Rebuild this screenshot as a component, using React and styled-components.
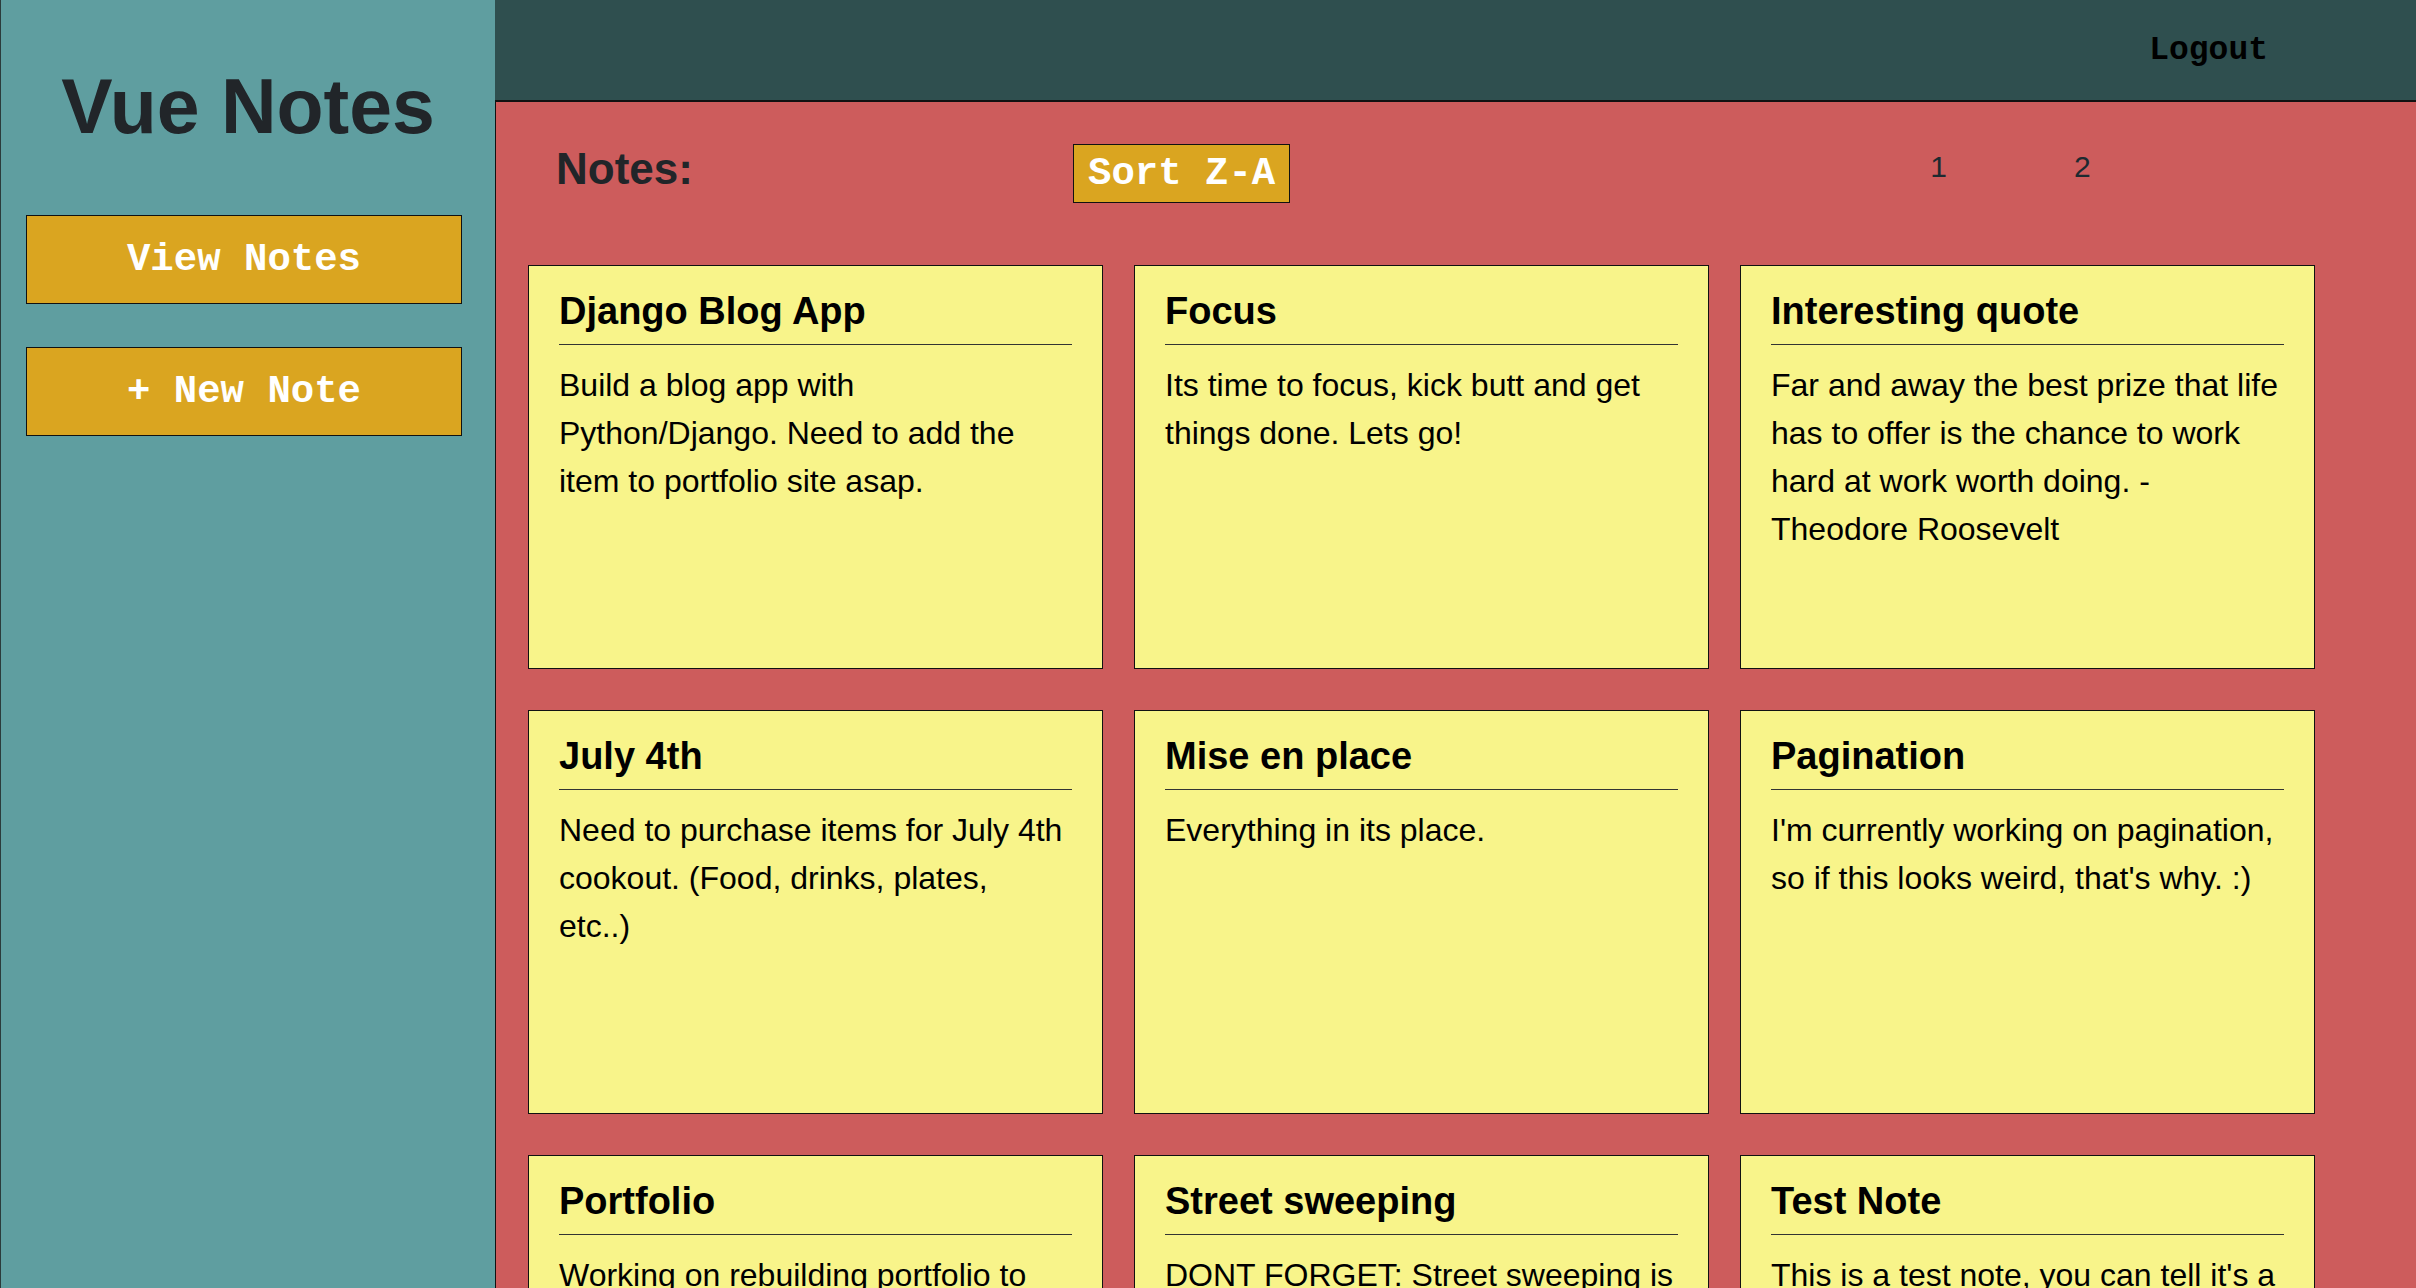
import React from "react";
import styled, { createGlobalStyle } from "styled-components";

const notes = [
  {
    title: "Django Blog App",
    body: "Build a blog app with Python/Django. Need to add the item to portfolio site asap.",
  },
  { title: "Focus", body: "Its time to focus, kick butt and get things done. Lets go!" },
  {
    title: "Interesting quote",
    body: "Far and away the best prize that life has to offer is the chance to work hard at work worth doing. - Theodore Roosevelt",
  },
  {
    title: "July 4th",
    body: "Need to purchase items for July 4th cookout. (Food, drinks, plates,\netc..)",
  },
  { title: "Mise en place", body: "Everything in its place." },
  {
    title: "Pagination",
    body: "I'm currently working on pagination, so if this looks weird, that's why. :)",
  },
  {
    title: "Portfolio",
    body: "Working on rebuilding portfolio to showcase the new projects.",
  },
  {
    title: "Street sweeping",
    body: "DONT FORGET: Street sweeping is on Tuesday morning.",
  },
  {
    title: "Test Note",
    body: "This is a test note, you can tell it's a test because of the title.",
  },
];

const GlobalStyle = createGlobalStyle`
  * {
    box-sizing: border-box;
  }
  body {
    margin: 0;
    font-family: "Liberation Sans", Arial, Helvetica, sans-serif;
    color: #212529;
  }
`;

const Layout = styled.div`
  display: flex;
  min-height: 100vh;
`;

const Sidebar = styled.aside`
  flex: 0 0 495px;
  background: #5f9ea0;
  border-left: 1px solid #2b3b3b;
  padding: 64px 0 0 25px;
  display: flex;
  flex-direction: column;
`;

const Brand = styled.h1`
  margin: 0 0 66px -25px;
  font-size: 77px;
  line-height: 85px;
  font-weight: 700;
  text-align: center;
  color: #212529;
`;

const SideButton = styled.button`
  width: 436px;
  height: 89px;
  margin-bottom: 43px;
  background: #daa520;
  border: 1px solid #111;
  color: #fff;
  font-family: "Liberation Mono", "Courier New", monospace;
  font-weight: 700;
  font-size: 39px;
  cursor: pointer;
`;

const Column = styled.div`
  flex: 1;
  display: flex;
  flex-direction: column;
  min-width: 0;
`;

const TopBar = styled.header`
  height: 100px;
  background: #2f4f4f;
  display: flex;
  align-items: center;
  justify-content: flex-end;
  padding-right: 148px;
`;

const LogoutLink = styled.a`
  font-family: "Liberation Mono", "Courier New", monospace;
  font-weight: 700;
  font-size: 33px;
  color: #000;
  cursor: pointer;
`;

const Main = styled.main`
  flex: 1;
  background: #cd5c5c;
  border-top: 2px solid #111;
  border-left: 1px solid #111;
  padding: 42px 0 60px 32px;
`;

const Toolbar = styled.div`
  display: flex;
  align-items: flex-start;
  padding-left: 28px;
  margin-bottom: 62px;
`;

const Heading = styled.h2`
  margin: 0;
  width: 517px;
  font-size: 44px;
  line-height: 49px;
  font-weight: 700;
  color: #212529;
`;

const SortButton = styled.button`
  height: 59px;
  padding: 0 14px;
  background: #daa520;
  border: 1px solid #111;
  color: #fff;
  font-family: "Liberation Mono", "Courier New", monospace;
  font-weight: 700;
  font-size: 39px;
  cursor: pointer;
`;

const Pager = styled.nav`
  display: flex;
  gap: 127px;
  margin: 6px 0 0 640px;
`;

const PageLink = styled.span`
  font-size: 30px;
  line-height: 34px;
  color: #1d2a30;
  cursor: pointer;
`;

const Grid = styled.div`
  display: grid;
  grid-template-columns: repeat(3, 575px);
  column-gap: 31px;
  row-gap: 41px;
`;

const Card = styled.article`
  height: 404px;
  background: #f8f48a;
  border: 1px solid #111;
  padding: 23px 30px 0;
  color: #000;
`;

const CardTitle = styled.h3`
  margin: 0;
  font-size: 38px;
  line-height: 44px;
  font-weight: 700;
  padding-bottom: 11px;
  border-bottom: 1px solid #333;
`;

const CardBody = styled.p`
  margin: 16px -3px 0 0;
  font-size: 32px;
  line-height: 48px;
  white-space: pre-line;
`;

export default function App() {
  return (
    <>
      <GlobalStyle />
      <Layout>
        <Sidebar>
          <Brand>Vue Notes</Brand>
          <SideButton>View Notes</SideButton>
          <SideButton>+ New Note</SideButton>
        </Sidebar>
        <Column>
          <TopBar>
            <LogoutLink>Logout</LogoutLink>
          </TopBar>
          <Main>
            <Toolbar>
              <Heading>Notes:</Heading>
              <SortButton>Sort Z-A</SortButton>
              <Pager>
                <PageLink>1</PageLink>
                <PageLink>2</PageLink>
              </Pager>
            </Toolbar>
            <Grid>
              {notes.map((note) => (
                <Card key={note.title}>
                  <CardTitle>{note.title}</CardTitle>
                  <CardBody>{note.body}</CardBody>
                </Card>
              ))}
            </Grid>
          </Main>
        </Column>
      </Layout>
    </>
  );
}
